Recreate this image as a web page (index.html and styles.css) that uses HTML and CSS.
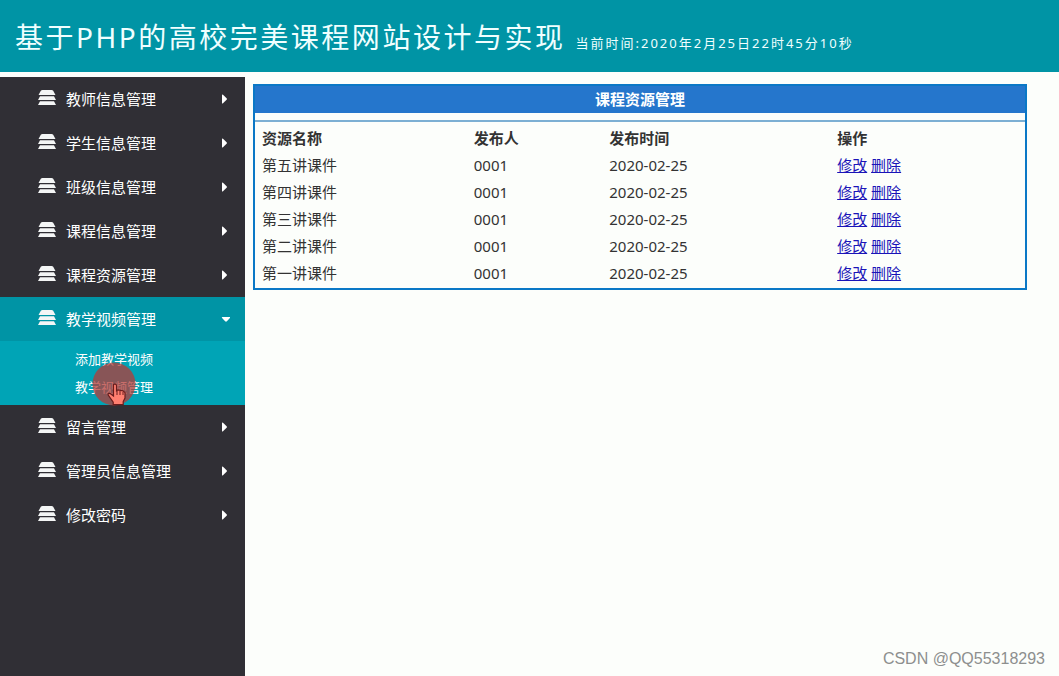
FILE: index.html
```html
<!DOCTYPE html>
<html lang="zh-CN">
<head>
<meta charset="utf-8">
<title>基于PHP的高校完美课程网站设计与实现</title>
<link rel="stylesheet" href="styles.css">
</head>
<body>
<svg class="defs" aria-hidden="true">
  <symbol id="stack" viewBox="0 0 20 17">
    <path d="M5.500 1h9q1.200 0 1.700.8l2.300 4.200h-17l2.300-4.200q.5-.8 1.700-.8z"/>
    <path d="M3 7.200h14l2 3.800h-18z"/>
    <path d="M3 12.200h14l2 3.800h-18z"/>
  </symbol>
  <symbol id="right" viewBox="0 0 10 12"><path d="M2 2q0-1 1-.3l3.600 3.500q.8.800 0 1.600l-3.600 3.500q-1 .7-1-.3z"/></symbol>
  <symbol id="down" viewBox="0 0 10 12"><path d="M2.500 4h7q1.200 0 .4 1l-3 3.200q-.9.900-1.800 0l-3-3.200q-.8-1 .4-1z"/></symbol>
</svg>
<header class="topbar">
  <h1 class="title">基于PHP的高校完美课程网站设计与实现</h1>
  <span class="clock">当前时间:2020年2月25日22时45分10秒</span>
</header>
<div class="layout">
  <nav class="sidebar">
    <button class="item" type="button"><svg class="icon"><use href="#stack"/></svg><span class="label">教师信息管理</span><svg class="arrow"><use href="#right"/></svg></button>
    <button class="item" type="button"><svg class="icon"><use href="#stack"/></svg><span class="label">学生信息管理</span><svg class="arrow"><use href="#right"/></svg></button>
    <button class="item" type="button"><svg class="icon"><use href="#stack"/></svg><span class="label">班级信息管理</span><svg class="arrow"><use href="#right"/></svg></button>
    <button class="item" type="button"><svg class="icon"><use href="#stack"/></svg><span class="label">课程信息管理</span><svg class="arrow"><use href="#right"/></svg></button>
    <button class="item" type="button"><svg class="icon"><use href="#stack"/></svg><span class="label">课程资源管理</span><svg class="arrow"><use href="#right"/></svg></button>
    <button class="item open" type="button" aria-expanded="true"><svg class="icon"><use href="#stack"/></svg><span class="label">教学视频管理</span><svg class="arrow"><use href="#down"/></svg></button>
    <div class="submenu">
      <a class="sublink" href="#">添加教学视频</a>
      <a class="sublink" href="#">教学视频管理</a>
      <svg class="pointer" viewBox="0 0 44 44" aria-hidden="true">
        <circle cx="22" cy="22" r="21.500" fill="#b83a36" fill-opacity=".74"/>
        <path d="M21.500 22.500q2-1.200 3 .8v5.500l1.500-1 2.500.6 2.500.4 2 1.800v5.500l-1.800 3.500v3h-10v-2.500l-5-7q-.5-2.500 2-1.500l3.300 2.500z" fill="#ff7f70" stroke="#6a1c1c" stroke-width="1.200"/>
        <path d="M25 29v4M28 29v4M31 30v3" fill="none" stroke="#6a1c1c"/>
      </svg>
    </div>
    <button class="item" type="button"><svg class="icon"><use href="#stack"/></svg><span class="label">留言管理</span><svg class="arrow"><use href="#right"/></svg></button>
    <button class="item" type="button"><svg class="icon"><use href="#stack"/></svg><span class="label">管理员信息管理</span><svg class="arrow"><use href="#right"/></svg></button>
    <button class="item" type="button"><svg class="icon"><use href="#stack"/></svg><span class="label">修改密码</span><svg class="arrow"><use href="#right"/></svg></button>
  </nav>
  <main class="content">
    <section class="panel">
      <h2 class="panel-title">课程资源管理</h2>
      <div class="panel-body">
        <table class="list">
          <thead>
            <tr><th class="name">资源名称</th><th class="author">发布人</th><th class="date">发布时间</th><th>操作</th></tr>
          </thead>
          <tbody>
            <tr><td>第五讲课件</td><td>0001</td><td>2020-02-25</td><td><a href="#">修改</a> <a href="#">删除</a></td></tr>
            <tr><td>第四讲课件</td><td>0001</td><td>2020-02-25</td><td><a href="#">修改</a> <a href="#">删除</a></td></tr>
            <tr><td>第三讲课件</td><td>0001</td><td>2020-02-25</td><td><a href="#">修改</a> <a href="#">删除</a></td></tr>
            <tr><td>第二讲课件</td><td>0001</td><td>2020-02-25</td><td><a href="#">修改</a> <a href="#">删除</a></td></tr>
            <tr><td>第一讲课件</td><td>0001</td><td>2020-02-25</td><td><a href="#">修改</a> <a href="#">删除</a></td></tr>
          </tbody>
        </table>
      </div>
    </section>
    <p class="credit">CSDN @QQ55318293</p>
  </main>
</div>
</body>
</html>
```

FILE: styles.css
```css
* { box-sizing: border-box; }

body {
  margin: 0;
  min-height: 100vh;
  display: flex;
  flex-direction: column;
  background: #fcfefb;
  color: #333;
  font: 15px/20px "Noto Sans", "Noto Sans CJK SC", sans-serif;
}

.defs { display: none; }

.topbar {
  display: flex;
  align-items: baseline;
  gap: 10px;
  height: 72px;
  padding: 16px 15px;
  margin-bottom: 5px;
  background: #0094a5;
  color: #f0ffff;
  letter-spacing: 2px;
  white-space: nowrap;
}

.title {
  margin: 0;
  font-size: 28px;
  line-height: 42px;
  font-weight: 400;
  letter-spacing: 0.09em;
}

.clock { font-size: 13px; }

.layout {
  flex: 1;
  display: flex;
}

.sidebar {
  flex: none;
  width: 245px;
  background: #302f35;
}

.item {
  display: flex;
  align-items: center;
  width: 100%;
  height: 44px;
  padding: 0 15px 1px 37px;
  border: 0;
  background: none;
  color: #fff;
  font: inherit;
  text-align: left;
}

.item.open { background: #0094a5; }

.icon {
  width: 20px;
  height: 17px;
  margin: 0 9px 2px 0;
  fill: #f4f6f6;
}

.label { flex: 1; }

.arrow {
  width: 10px;
  height: 12px;
  fill: #fff;
  overflow: visible;
}

.submenu {
  position: relative;
  padding: 4px 0 4px 75px;
  background: #00a4b6;
}

.sublink {
  display: block;
  color: #fff;
  font-size: 13px;
  line-height: 28px;
  text-decoration: none;
}

.pointer {
  position: absolute;
  left: 92px;
  top: 21px;
  width: 44px;
  height: 44px;
  overflow: visible;
}

.content {
  flex: 1;
  display: flex;
  flex-direction: column;
  justify-content: space-between;
  padding: 7px 14px 5px 8px;
}

.panel {
  margin-right: 18px;
  border: 2px solid #0a78c6;
}

.panel-title {
  margin: 0 0 7px;
  background: #2576cc;
  color: #fff;
  font-size: 15px;
  line-height: 27px;
  font-weight: 700;
  text-align: center;
}

.panel-body {
  padding: 2px 0;
  border-top: 2px solid #7cafd3;
}

.list {
  width: 100%;
  table-layout: fixed;
  border-collapse: collapse;
}

.list th,
.list td {
  height: 27px;
  padding: 0 0 0 7px;
  text-align: left;
}

.list .name { width: 27.5%; }
.list .author { width: 17.6%; }
.list .date { width: 29.6%; }

.list a { color: #1a14b8; }

.credit {
  margin: 0;
  color: #8d8f8e;
  font: 16px/24px "Liberation Sans", sans-serif;
  text-align: right;
}
```
